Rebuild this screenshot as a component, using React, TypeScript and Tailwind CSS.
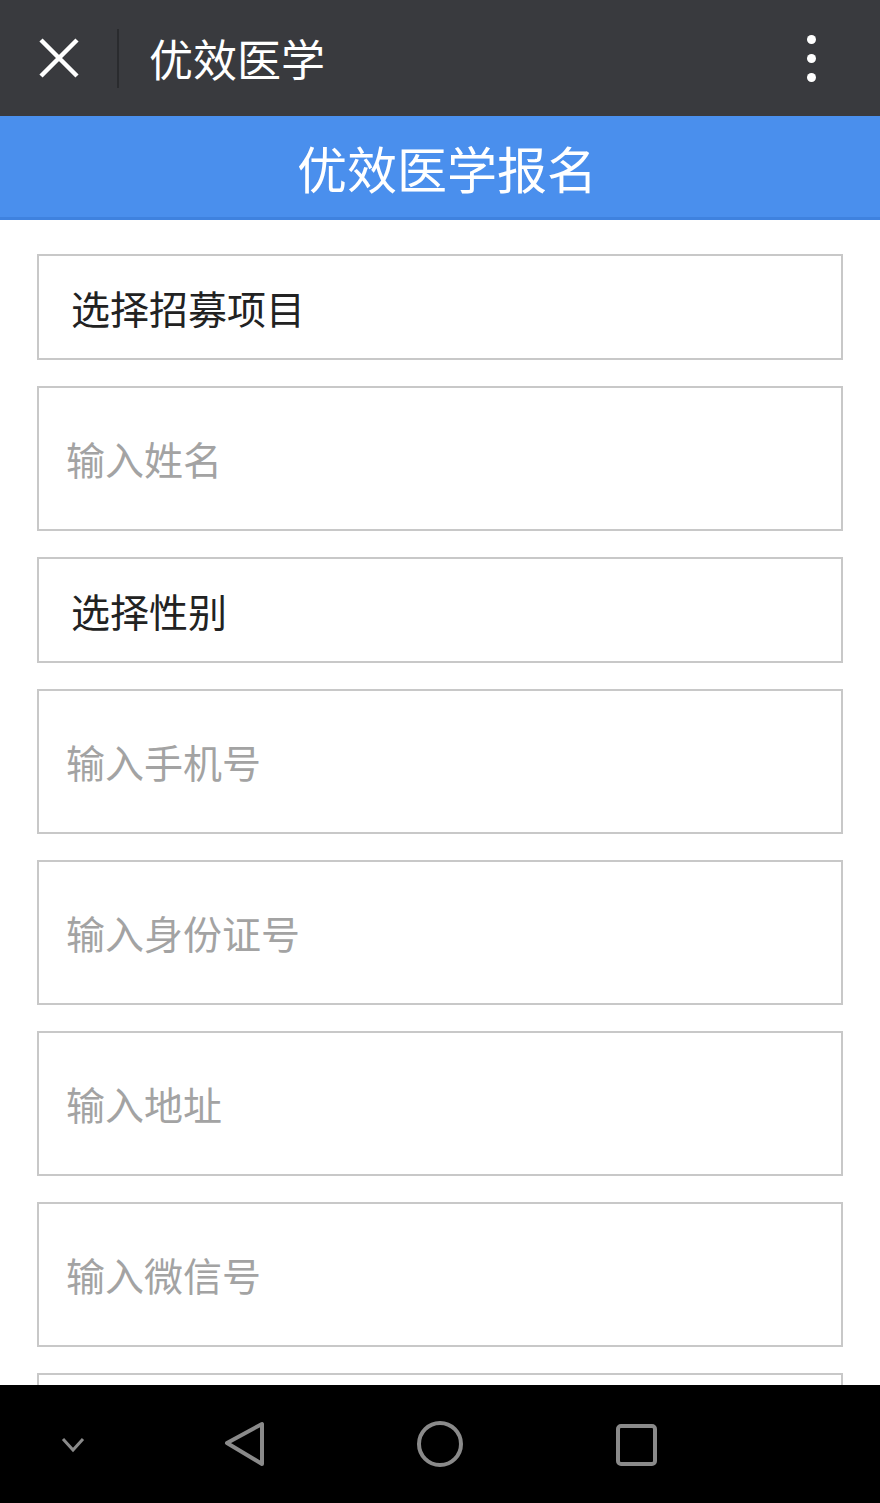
import React from "react";

const font = { fontFamily: '"Noto Sans CJK SC", "Noto Sans", sans-serif' };

function SelectBox({ label }: { label: string }) {
  return (
    <div className="h-[106px] border-2 border-[#c8c8c8] bg-white flex items-center pl-[32px] shrink-0">
      <span className="text-[39px] leading-none text-[#222222]">{label}</span>
    </div>
  );
}

function InputBox({ label }: { label: string }) {
  return (
    <div className="h-[145px] border-2 border-[#c8c8c8] bg-white flex items-center pl-[27px] shrink-0">
      <span className="text-[39px] leading-none text-[#a3a3a3]">{label}</span>
    </div>
  );
}

export default function App() {
  return (
    <div className="w-[880px] h-[1503px] flex flex-col bg-white overflow-hidden" style={font}>
      {/* Top bar */}
      <div className="h-[116px] shrink-0 bg-[#393a3e] flex items-center">
        <div className="w-[117px] flex items-center justify-center">
          <svg width="40" height="40" viewBox="0 0 40 40">
            <path d="M2 2 L38 38 M38 2 L2 38" stroke="#ffffff" strokeWidth="4.5" strokeLinecap="butt" />
          </svg>
        </div>
        <div className="w-[2px] h-[59px] bg-[#2a2b2e]" />
        <div className="ml-[30px] text-[44px] leading-none text-white flex-1">优效医学</div>
        <div className="w-[9px] mr-[64px] flex flex-col gap-[10px]">
          <div className="w-[9px] h-[9px] rounded-full bg-white" />
          <div className="w-[9px] h-[9px] rounded-full bg-white" />
          <div className="w-[9px] h-[9px] rounded-full bg-white" />
        </div>
      </div>
      {/* Blue header */}
      <div className="h-[104px] shrink-0 bg-[#4a8fed] border-b-[3px] border-[#3f82df] flex items-center justify-center pl-[14px]">
        <span className="text-[50px] leading-none text-white">优效医学报名</span>
      </div>
      {/* Form */}
      <div className="flex-1 overflow-hidden">
        <div className="pt-[34px] px-[37px] flex flex-col gap-[26px]">
          <SelectBox label="选择招募项目" />
          <InputBox label="输入姓名" />
          <SelectBox label="选择性别" />
          <InputBox label="输入手机号" />
          <InputBox label="输入身份证号" />
          <InputBox label="输入地址" />
          <InputBox label="输入微信号" />
          <InputBox label="" />
        </div>
      </div>
      {/* Nav bar */}
      <div className="h-[118px] shrink-0 bg-black">
        <svg width="880" height="118" viewBox="0 0 880 118" className="block">
          <path d="M63 54 L73 65 L83 54" stroke="#8a8a8a" strokeWidth="3" fill="none" />
          <path d="M262 39 L262 79 L227 58 Z" stroke="#8a8a8a" strokeWidth="4" fill="none" strokeLinejoin="round" />
          <circle cx="440" cy="59" r="21" stroke="#8a8a8a" strokeWidth="4" fill="none" />
          <rect x="618" y="41" width="37" height="38" rx="3" stroke="#8a8a8a" strokeWidth="4" fill="none" />
        </svg>
      </div>
    </div>
  );
}
